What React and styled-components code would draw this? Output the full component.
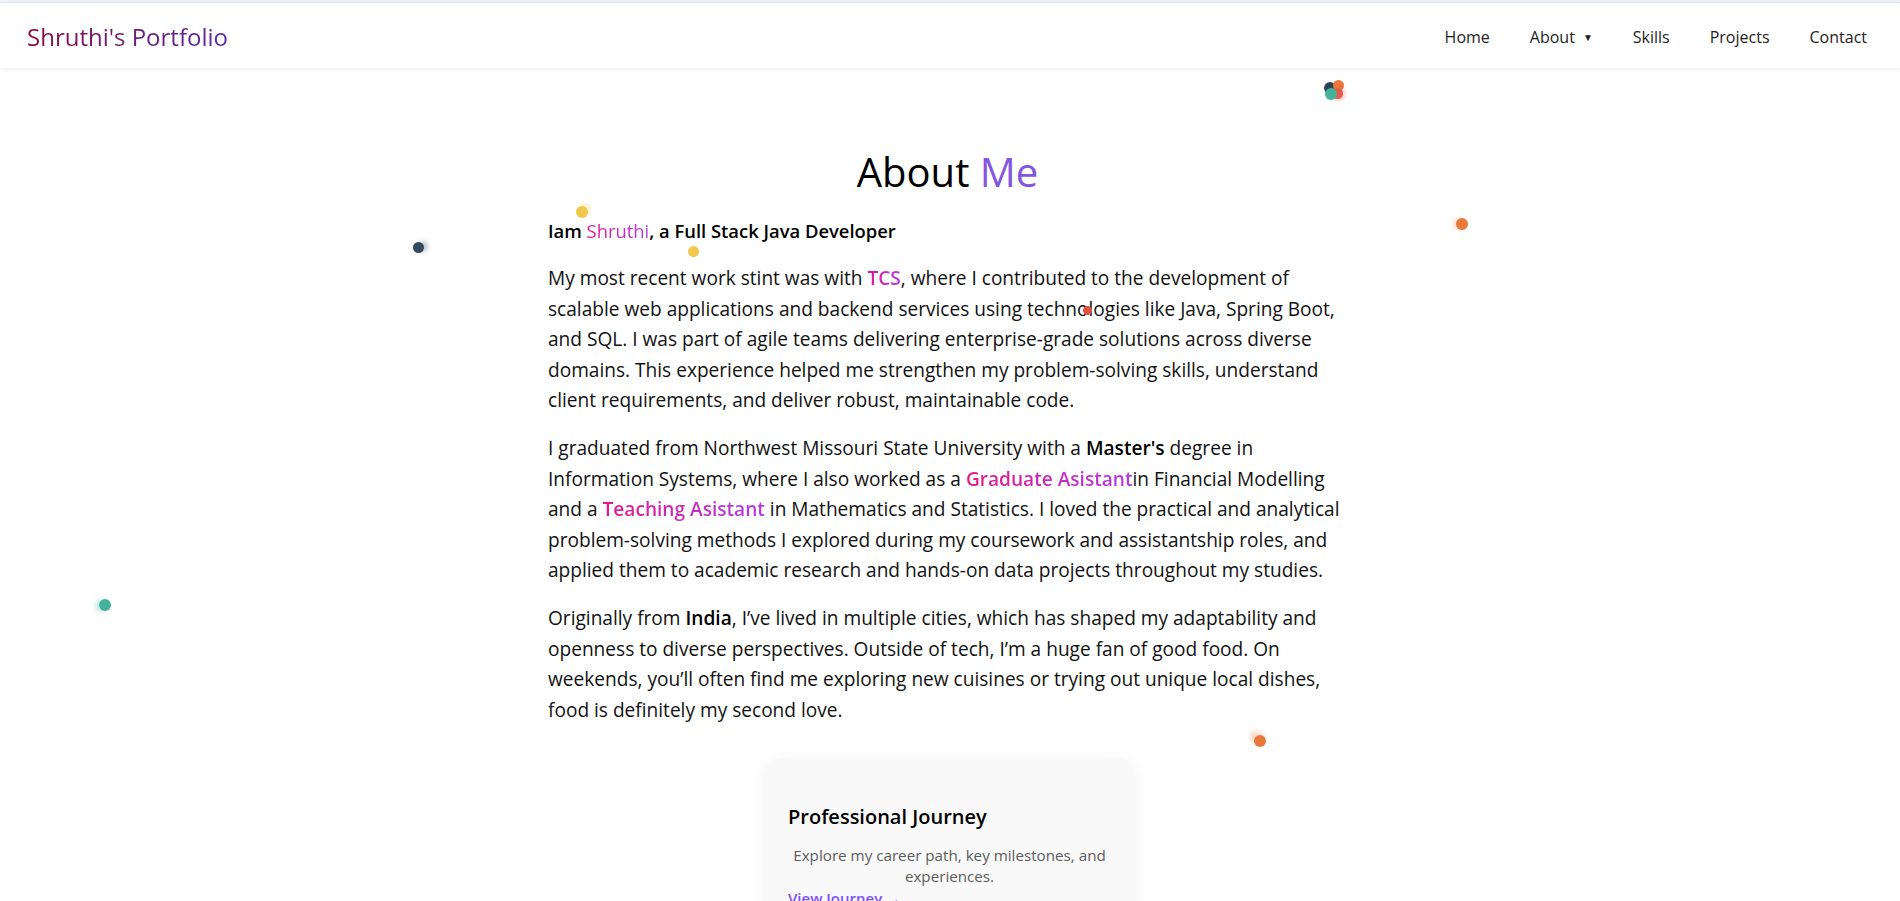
import React from "react";
import styled, { createGlobalStyle } from "styled-components";

const Global = createGlobalStyle`
  html, body { margin: 0; padding: 0; overflow: hidden; background: #ffffff; }
  body { font-family: "Open Sans", "Noto Sans", sans-serif; color: #111; }
  * { box-sizing: border-box; }
`;

const Page = styled.div`
  position: relative;
  width: 100%;
  height: 901px;
  overflow: hidden;
  background: #fff;
`;

const TopStrip = styled.div`
  height: 3px;
  background: #eef0fa;
  border-bottom: 1px solid #e4e6f4;
`;

const Header = styled.header`
  height: 65px;
  display: flex;
  align-items: center;
  justify-content: space-between;
  padding: 2px 33px 0 27px;
  background: #fff;
  box-shadow: 0 2px 5px rgba(0, 0, 0, 0.07);
  position: relative;
  z-index: 2;
`;

const Logo = styled.div`
  font-size: 24px;
  font-weight: 500;
  background: linear-gradient(90deg, #8c0f3c 0%, #6a1f7a 55%, #5a2ca6 100%);
  -webkit-background-clip: text;
  background-clip: text;
  color: transparent;
`;

const Nav = styled.nav`
  display: flex;
  align-items: center;
  gap: 40px;
`;

const NavLink = styled.a`
  font-size: 16px;
  color: #1d1d1d;
  text-decoration: none;
  display: flex;
  align-items: center;
`;

const Caret = styled.span`
  font-size: 10px;
  margin-left: 8px;
  margin-top: 1px;
`;

const Section = styled.main`
  width: 804px;
  margin: 0 auto;
  padding-top: 76px;
`;

const Title = styled.h1`
  margin: 0;
  padding-right: 5px;
  text-align: center;
  font-size: 40px;
  font-weight: 500;
  line-height: normal;
  color: #000;
`;

const Accent = styled.span`
  color: #8356e0;
`;

const Intro = styled.h3`
  margin: 16px 0 17px;
  font-size: 18.4px;
  font-weight: 600;
  line-height: 31px;
  color: #000;
`;

const Grad = styled.span`
  background: linear-gradient(90deg, #e3198a 0%, #b23ce6 100%);
  -webkit-background-clip: text;
  background-clip: text;
  color: transparent;
  font-weight: ${(p) => (p.$light ? 500 : 600)};
`;

const Para = styled.p`
  margin: 0 0 17px;
  font-size: 19.1px;
  line-height: 30.6px;
  color: #111;
`;

const Strong = styled.strong`
  font-weight: 600;
  color: #000;
`;

const Card = styled.div`
  width: 370px;
  margin: 33px auto 0;
  padding: 45px 24px 25px 23px;
  background: #f9f9f9;
  border-radius: 16px;
  box-shadow: 0 4px 18px rgba(0, 0, 0, 0.06);
`;

const CardTitle = styled.h3`
  margin: 0 0 15px;
  font-size: 20px;
  font-weight: 600;
  line-height: normal;
  color: #000;
`;

const CardText = styled.p`
  margin: 0;
  text-align: center;
  font-size: 15.2px;
  line-height: 20.5px;
  color: #5c5c5c;
`;

const CardLink = styled.a`
  display: block;
  margin-top: 2px;
  font-size: 15px;
  font-weight: 600;
  color: #7c4dff;
  text-decoration: none;
`;

const Dot = styled.span`
  position: absolute;
  width: ${(p) => p.$size}px;
  height: ${(p) => p.$size}px;
  border-radius: 50%;
  background: ${(p) => p.$color};
  box-shadow: ${(p) => p.$trail || "none"};
  z-index: 3;
  pointer-events: none;
`;

const dots = [
  { x: 1330, y: 88, s: 12, c: "#2f4356" },
  { x: 1338, y: 85, s: 11, c: "#e8793a" },
  { x: 1337, y: 93, s: 11, c: "#e55a4a", t: "2px 1px 4px rgba(229,90,74,0.4)" },
  { x: 1331, y: 94, s: 12, c: "#43b39c" },
  { x: 1462, y: 224, s: 12, c: "#e8793a", t: "-3px 0 4px rgba(232,121,58,0.25)" },
  { x: 582, y: 212, s: 12, c: "#f1c84b", t: "3px -3px 4px rgba(241,200,75,0.3)" },
  { x: 693, y: 251, s: 11, c: "#f1c84b" },
  { x: 418, y: 247, s: 11, c: "#34495e", t: "4px -1px 4px rgba(52,73,94,0.3)" },
  { x: 1087, y: 310, s: 9, c: "#e0533a" },
  { x: 105, y: 605, s: 12, c: "#43b39c", t: "-4px 1px 5px rgba(67,179,156,0.3)" },
  { x: 1260, y: 741, s: 12, c: "#e8793a", t: "-4px -4px 5px rgba(232,121,58,0.3)" },
];

export default function App() {
  return (
    <Page>
      <Global />
      <TopStrip />
      <Header>
        <Logo>Shruthi's Portfolio</Logo>
        <Nav>
          <NavLink>Home</NavLink>
          <NavLink>
            About<Caret>▼</Caret>
          </NavLink>
          <NavLink>Skills</NavLink>
          <NavLink>Projects</NavLink>
          <NavLink>Contact</NavLink>
        </Nav>
      </Header>
      <Section>
        <Title>
          About <Accent>Me</Accent>
        </Title>
        <Intro>
          Iam <Grad $light>Shruthi</Grad>, a Full Stack Java Developer
        </Intro>
        <Para>
          My most recent work stint was with <Grad>TCS</Grad>, where I contributed to the
          development of scalable web applications and backend services using technologies
          like Java, Spring Boot, and SQL. I was part of agile teams delivering
          enterprise-grade solutions across diverse domains. This experience helped me
          strengthen my problem-solving skills, understand client requirements, and deliver
          robust, maintainable code.
        </Para>
        <Para>
          I graduated from Northwest Missouri State University with a <Strong>Master's</Strong>{" "}
          degree in Information Systems, where I also worked as a{" "}
          <Grad>Graduate Asistant</Grad>in Financial Modelling and a{" "}
          <Grad>Teaching Asistant</Grad> in Mathematics and Statistics. I loved the practical
          and analytical problem-solving methods I explored during my coursework and
          assistantship roles, and applied them to academic research and hands-on data
          projects throughout my studies.
        </Para>
        <Para>
          Originally from <Strong>India</Strong>, I’ve lived in multiple cities, which has
          shaped my adaptability and openness to diverse perspectives. Outside of tech, I’m a
          huge fan of good food. On weekends, you’ll often find me exploring new cuisines or
          trying out unique local dishes, food is definitely my second love.
        </Para>
        <Card>
          <CardTitle>Professional Journey</CardTitle>
          <CardText>Explore my career path, key milestones, and experiences.</CardText>
          <CardLink>View Journey →</CardLink>
        </Card>
      </Section>
      {dots.map((d, i) => (
        <Dot
          key={i}
          $size={d.s}
          $color={d.c}
          $trail={d.t}
          style={{ left: d.x - d.s / 2, top: d.y - d.s / 2 }}
        />
      ))}
    </Page>
  );
}
